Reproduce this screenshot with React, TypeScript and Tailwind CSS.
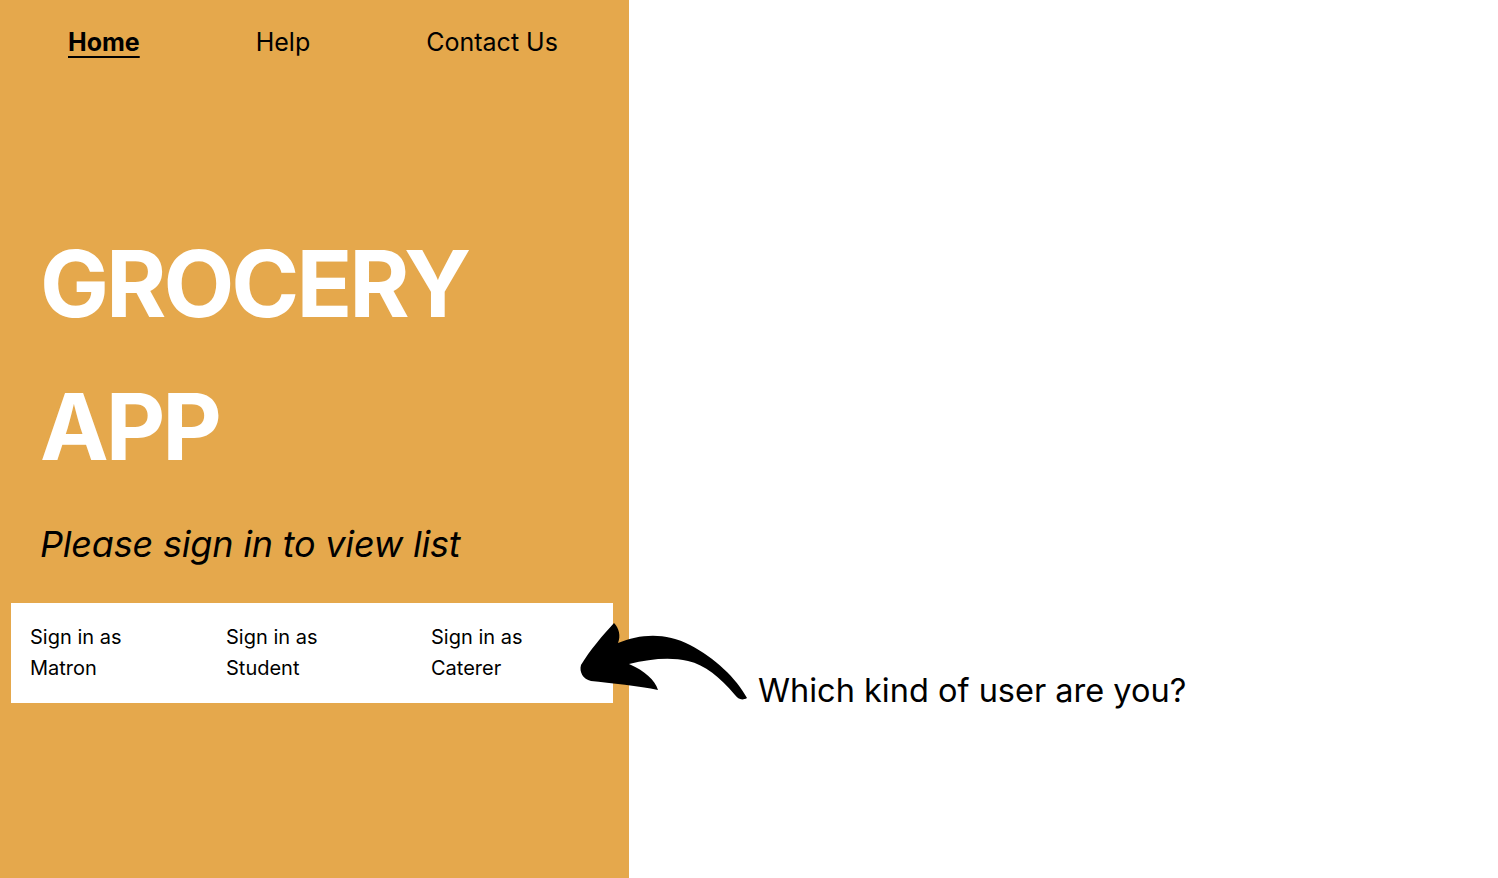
import React from 'react';

// 导航链接
const navLinks = [
  { label: 'Home', active: true },
  { label: 'Help', active: false },
  { label: 'Contact Us', active: false },
];

// 登录角色
const roles = [
  { role: 'Matron', width: 'w-[196px]' },
  { role: 'Student', width: 'w-[205px]' },
  { role: 'Caterer', width: 'w-[120px]' },
];

// 弯曲箭头
function CurvedArrow() {
  return (
    <svg width="180" height="90" viewBox="575 615 180 90" className="block">
      <path
        d="M614,623 C619,628 621,636 618,643 C640,634 665,632 690,645 C715,658 736,678 747,698 C742,701 738,699 735,695 C720,677 705,665 688,661 C670,657 650,659 629,664 C645,671 655,680 658,690 C640,686 610,683 591,681 C583,679 579,672 581,665 C590,650 603,635 614,623 Z"
        fill="#000"
      />
    </svg>
  );
}

export default function App() {
  return (
    <div className="relative flex w-full h-[878px] bg-white font-['Inter',sans-serif] overflow-hidden">
      {/* 左侧面板 */}
      <div className="w-[629px] h-full bg-[#E5A84C] flex flex-col">
        <nav className="flex items-center gap-[116px] pl-[68px] pt-[26px] text-[25px] leading-[32px] text-black">
          {navLinks.map((l) => (
            <a
              key={l.label}
              className={l.active ? 'font-bold underline underline-offset-[5px] decoration-2' : 'font-normal'}
            >
              {l.label}
            </a>
          ))}
        </nav>

        <h1 className="mt-[154px] pl-[40px] text-[92px] leading-[143px] font-bold tracking-[-3px] text-white">
          GROCERY
          <br />
          APP
        </h1>

        <p className="mt-[24px] pl-[40px] text-[36px] leading-[44px] italic text-black tracking-[-0.2px]">
          Please sign in to view list
        </p>

        <div className="mt-[37px] ml-[11px] w-[602px] h-[100px] bg-white flex items-center pl-[19px] text-[20px] leading-[31px] text-black">
          {roles.map((r) => (
            <div key={r.role} className={r.width}>
              Sign in as
              <br />
              {r.role}
            </div>
          ))}
        </div>
      </div>

      {/* 提示注释 */}
      <div className="absolute left-[575px] top-[615px] flex items-end">
        <CurvedArrow />
        <span className="ml-[3px] mb-[-6px] text-[32.5px] leading-[40px] text-black whitespace-nowrap">
          Which kind of user are you?
        </span>
      </div>
    </div>
  );
}
